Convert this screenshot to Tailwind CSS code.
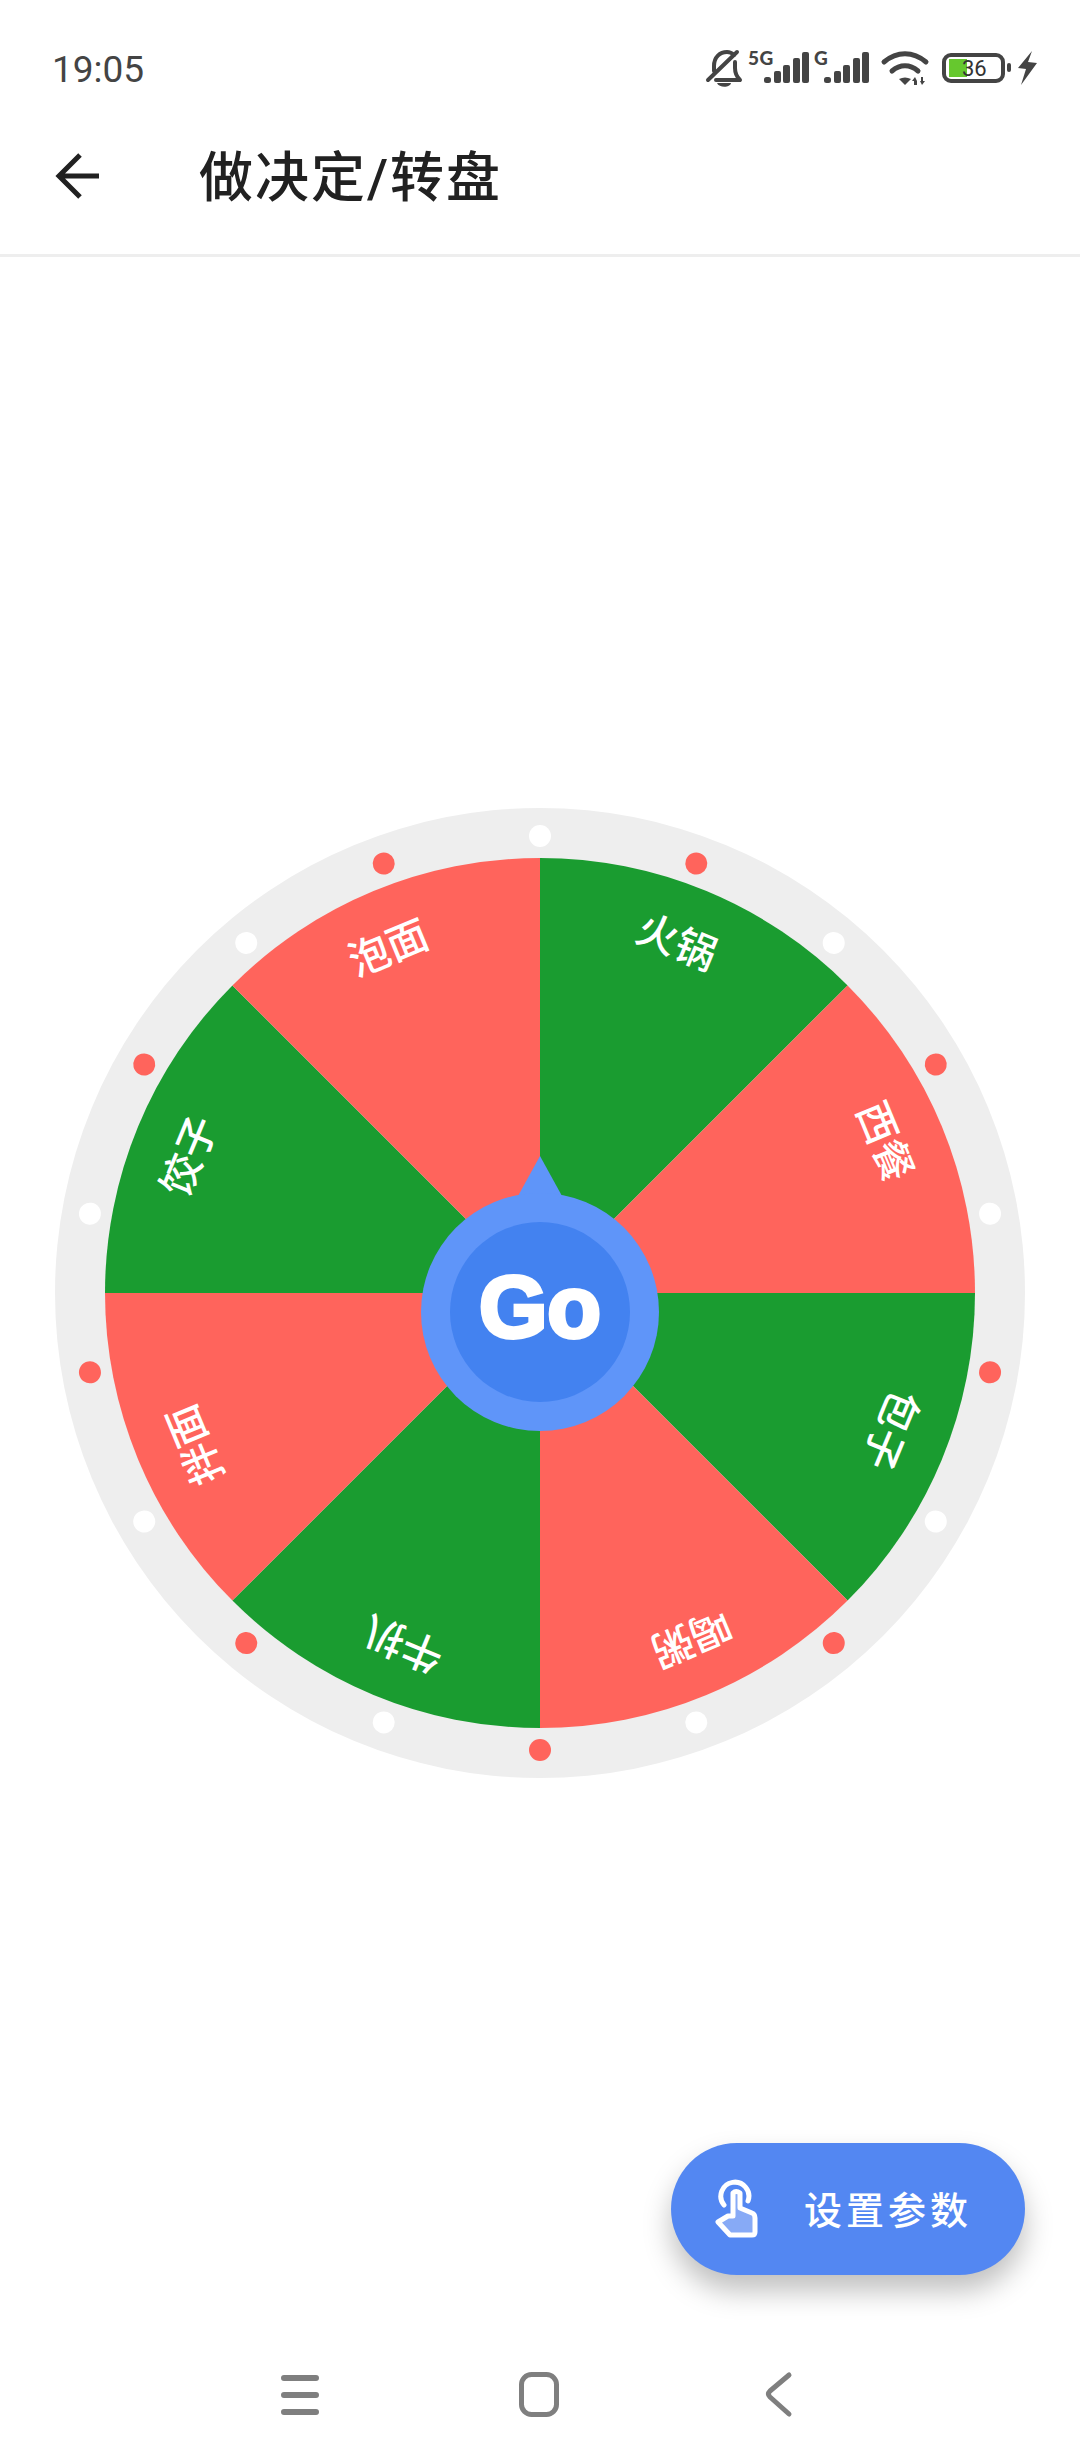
<!DOCTYPE html>
<html><head><meta charset="utf-8"><script src="https://cdn.jsdelivr.net/npm/@tailwindcss/browser@4"></script></head>
<body class="bg-white">
<div class="relative w-[1080px] h-[2460px] flex flex-col bg-white overflow-hidden font-['Roboto','Noto_Sans_CJK_SC',sans-serif]">
  <div class="h-[101px] pt-[50px] pl-[52px] shrink-0 relative">
    <span class="block text-[37px] leading-[40px] text-[#444]">19:05</span>
    <svg class="absolute left-[700px] top-[40px]" width="340" height="50" viewBox="0 0 340 50" fill="#444">
      <g fill="none" stroke="#444" stroke-width="4" stroke-linecap="round" stroke-linejoin="round">
        <path d="M14 31V26C14 17 20 12 27 12C30 12 32 13 34 15"/>
        <path d="M35 22V28C35 33 37 37 40 40H16"/>
        <path d="M8 40 37 12"/>
      </g>
      <path d="M17 43h14c-1 5-12 5-14 0z"/>
      <text x="48" y="25" font-family="Lato,sans-serif" font-size="19" font-weight="900" letter-spacing="0.5">5G</text>
      <rect x="64" y="37" width="7" height="6" rx="2.500"/><rect x="74" y="31" width="7" height="12" rx="2"/><rect x="83" y="25" width="7" height="18" rx="2"/><rect x="93" y="18" width="7" height="25" rx="2"/><rect x="102" y="12" width="7" height="31" rx="2"/>
      <text x="114" y="25" font-family="Lato,sans-serif" font-size="19" font-weight="900">G</text>
      <rect x="124" y="37" width="7" height="6" rx="2.500"/><rect x="134" y="31" width="7" height="12" rx="2"/><rect x="143" y="25" width="7" height="18" rx="2"/><rect x="153" y="18" width="7" height="25" rx="2"/><rect x="162" y="12" width="7" height="31" rx="2"/>
      <g fill="none" stroke="#444" stroke-width="5" stroke-linecap="round">
        <path d="M184 22c13-11 29-11 42 0"/><path d="M192 31c8-7 18-7 26 0"/>
      </g>
      <path d="M199 39c4-2 8-2 12 0l-6 6z"/>
      <path d="M216 45h-2v-4h-2l3-4 2 4v4zM221 37h2v4h2l-3 4-2-4h1z"/>
      <rect x="244" y="15" width="59" height="26" rx="7" fill="none" stroke="#444" stroke-width="4"/>
      <rect x="249" y="19" width="18" height="18" fill="#66c82e"/>
      <text x="262" y="36" font-family="Roboto,sans-serif" font-size="22" fill="#333">36</text>
      <rect x="307" y="23" width="4" height="9" rx="2"/>
      <path d="M332 11 318 28 326 29 321 45 337 23 328 22z"/>
    </svg>
  </div>
  <div class="h-[156px] shrink-0 border-b-[3px] border-[#eeeeee] flex items-center pt-[3px]">
    <svg class="ml-[54px] -mt-[6px]" width="46" height="48" viewBox="0 0 46 48" fill="none" stroke="#212121" stroke-width="5"><path d="M45 24H5M26 3 5 24l21 21"/></svg>
    <span class="ml-[99px] text-[54px] leading-[60px] font-medium text-[#212121] tracking-[2px]">做决定/转盘</span>
  </div>
  <div class="flex-1 relative">
    <svg class="absolute left-[55px] top-[551px]" width="970" height="970" viewBox="-485 -485 970 970">
      <circle r="485" fill="#eeeeee"/>
      <path d="M0 0V-435A435 435 0 0 1 307.6 -307.6Z" fill="#1a9c30"/>
      <path d="M0 0L307.6 -307.6A435 435 0 0 1 435 0Z" fill="#ff645c"/>
      <path d="M0 0H435A435 435 0 0 1 307.6 307.6Z" fill="#1a9c30"/>
      <path d="M0 0L307.6 307.6A435 435 0 0 1 0 435Z" fill="#ff645c"/>
      <path d="M0 0V435A435 435 0 0 1 -307.6 307.6Z" fill="#1a9c30"/>
      <path d="M0 0L-307.6 307.6A435 435 0 0 1 -435 0Z" fill="#ff645c"/>
      <path d="M0 0H-435A435 435 0 0 1 -307.6 -307.6Z" fill="#1a9c30"/>
      <path d="M0 0L-307.6 -307.6A435 435 0 0 1 0 -435Z" fill="#ff645c"/>
      <g fill="#fff">
        <circle cy="-457" r="11"/><circle cy="-457" r="11" transform="rotate(40)"/><circle cy="-457" r="11" transform="rotate(80)"/><circle cy="-457" r="11" transform="rotate(120)"/><circle cy="-457" r="11" transform="rotate(160)"/><circle cy="-457" r="11" transform="rotate(200)"/><circle cy="-457" r="11" transform="rotate(240)"/><circle cy="-457" r="11" transform="rotate(280)"/><circle cy="-457" r="11" transform="rotate(320)"/>
      </g>
      <g fill="#ff645c">
        <circle cy="-457" r="11" transform="rotate(20)"/><circle cy="-457" r="11" transform="rotate(60)"/><circle cy="-457" r="11" transform="rotate(100)"/><circle cy="-457" r="11" transform="rotate(140)"/><circle cy="-457" r="11" transform="rotate(180)"/><circle cy="-457" r="11" transform="rotate(220)"/><circle cy="-457" r="11" transform="rotate(260)"/><circle cy="-457" r="11" transform="rotate(300)"/><circle cy="-457" r="11" transform="rotate(340)"/>
      </g>
      <g fill="#fff" font-family="'Noto Sans CJK SC',sans-serif" font-size="41" font-weight="500" text-anchor="middle">
        <text transform="rotate(22.500) translate(-8 -362)">火锅</text>
        <text transform="rotate(67.500) translate(-8 -362)">西餐</text>
        <text transform="rotate(112.500) translate(-8 -362)">包子</text>
        <text transform="rotate(157.500) translate(-8 -362)">喝粥</text>
        <text transform="rotate(202.500) translate(-8 -362)">牛扒</text>
        <text transform="rotate(247.500) translate(-8 -362)">拌面</text>
        <text transform="rotate(292.500) translate(-8 -362)">饺子</text>
        <text transform="rotate(337.500) translate(-8 -362)">泡面</text>
      </g>
      <path d="M0 -137 L-22 -97 L22 -97Z" fill="#5f95f9"/>
      <circle cy="19" r="119" fill="#5f95f9"/>
      <circle cy="19" r="90" fill="#4382f0"/>
      <text y="44" text-anchor="middle" fill="#fff" stroke="#fff" stroke-width="4" font-family="'Liberation Sans',sans-serif" font-weight="700" font-size="88">Go</text>
    </svg>
  </div>
  <div class="absolute left-[671px] top-[2143px] w-[354px] h-[132px] rounded-full bg-[#5387f2] shadow-[0_16px_28px_rgba(0,0,0,0.25)] flex items-center">
    <svg class="ml-[44px]" width="44" height="60" viewBox="0 0 44 60" fill="none" stroke="#fff" stroke-width="5" stroke-linejoin="round" stroke-linecap="round">
      <path d="M13 37 3 43 15 56H37Q40 56 40 53V39Q40 35 37 34L25 29V14Q21 11 18 14V37Z" fill="#87aaf6"/>
      <path d="M9 26A14 14 0 1 1 33 22"/>
    </svg>
    <span class="ml-[45px] mt-[4px] text-[38px] leading-[44px] font-medium text-white tracking-[4px]">设置参数</span>
  </div>
  <svg class="absolute left-[250px] top-[2334px]" width="580" height="110" viewBox="0 0 580 110" fill="none" stroke="#7f7f7f" stroke-linecap="round" stroke-linejoin="round">
    <path d="M34 44H66M34 61H66M34 78H66" stroke-width="6"/>
    <rect x="271.500" y="40.500" width="35" height="40" rx="10" stroke-width="5"/>
    <path d="M539 41 520 57Q517 60 520 63L539 80" stroke-width="5"/>
  </svg>
</div>
</body></html>
